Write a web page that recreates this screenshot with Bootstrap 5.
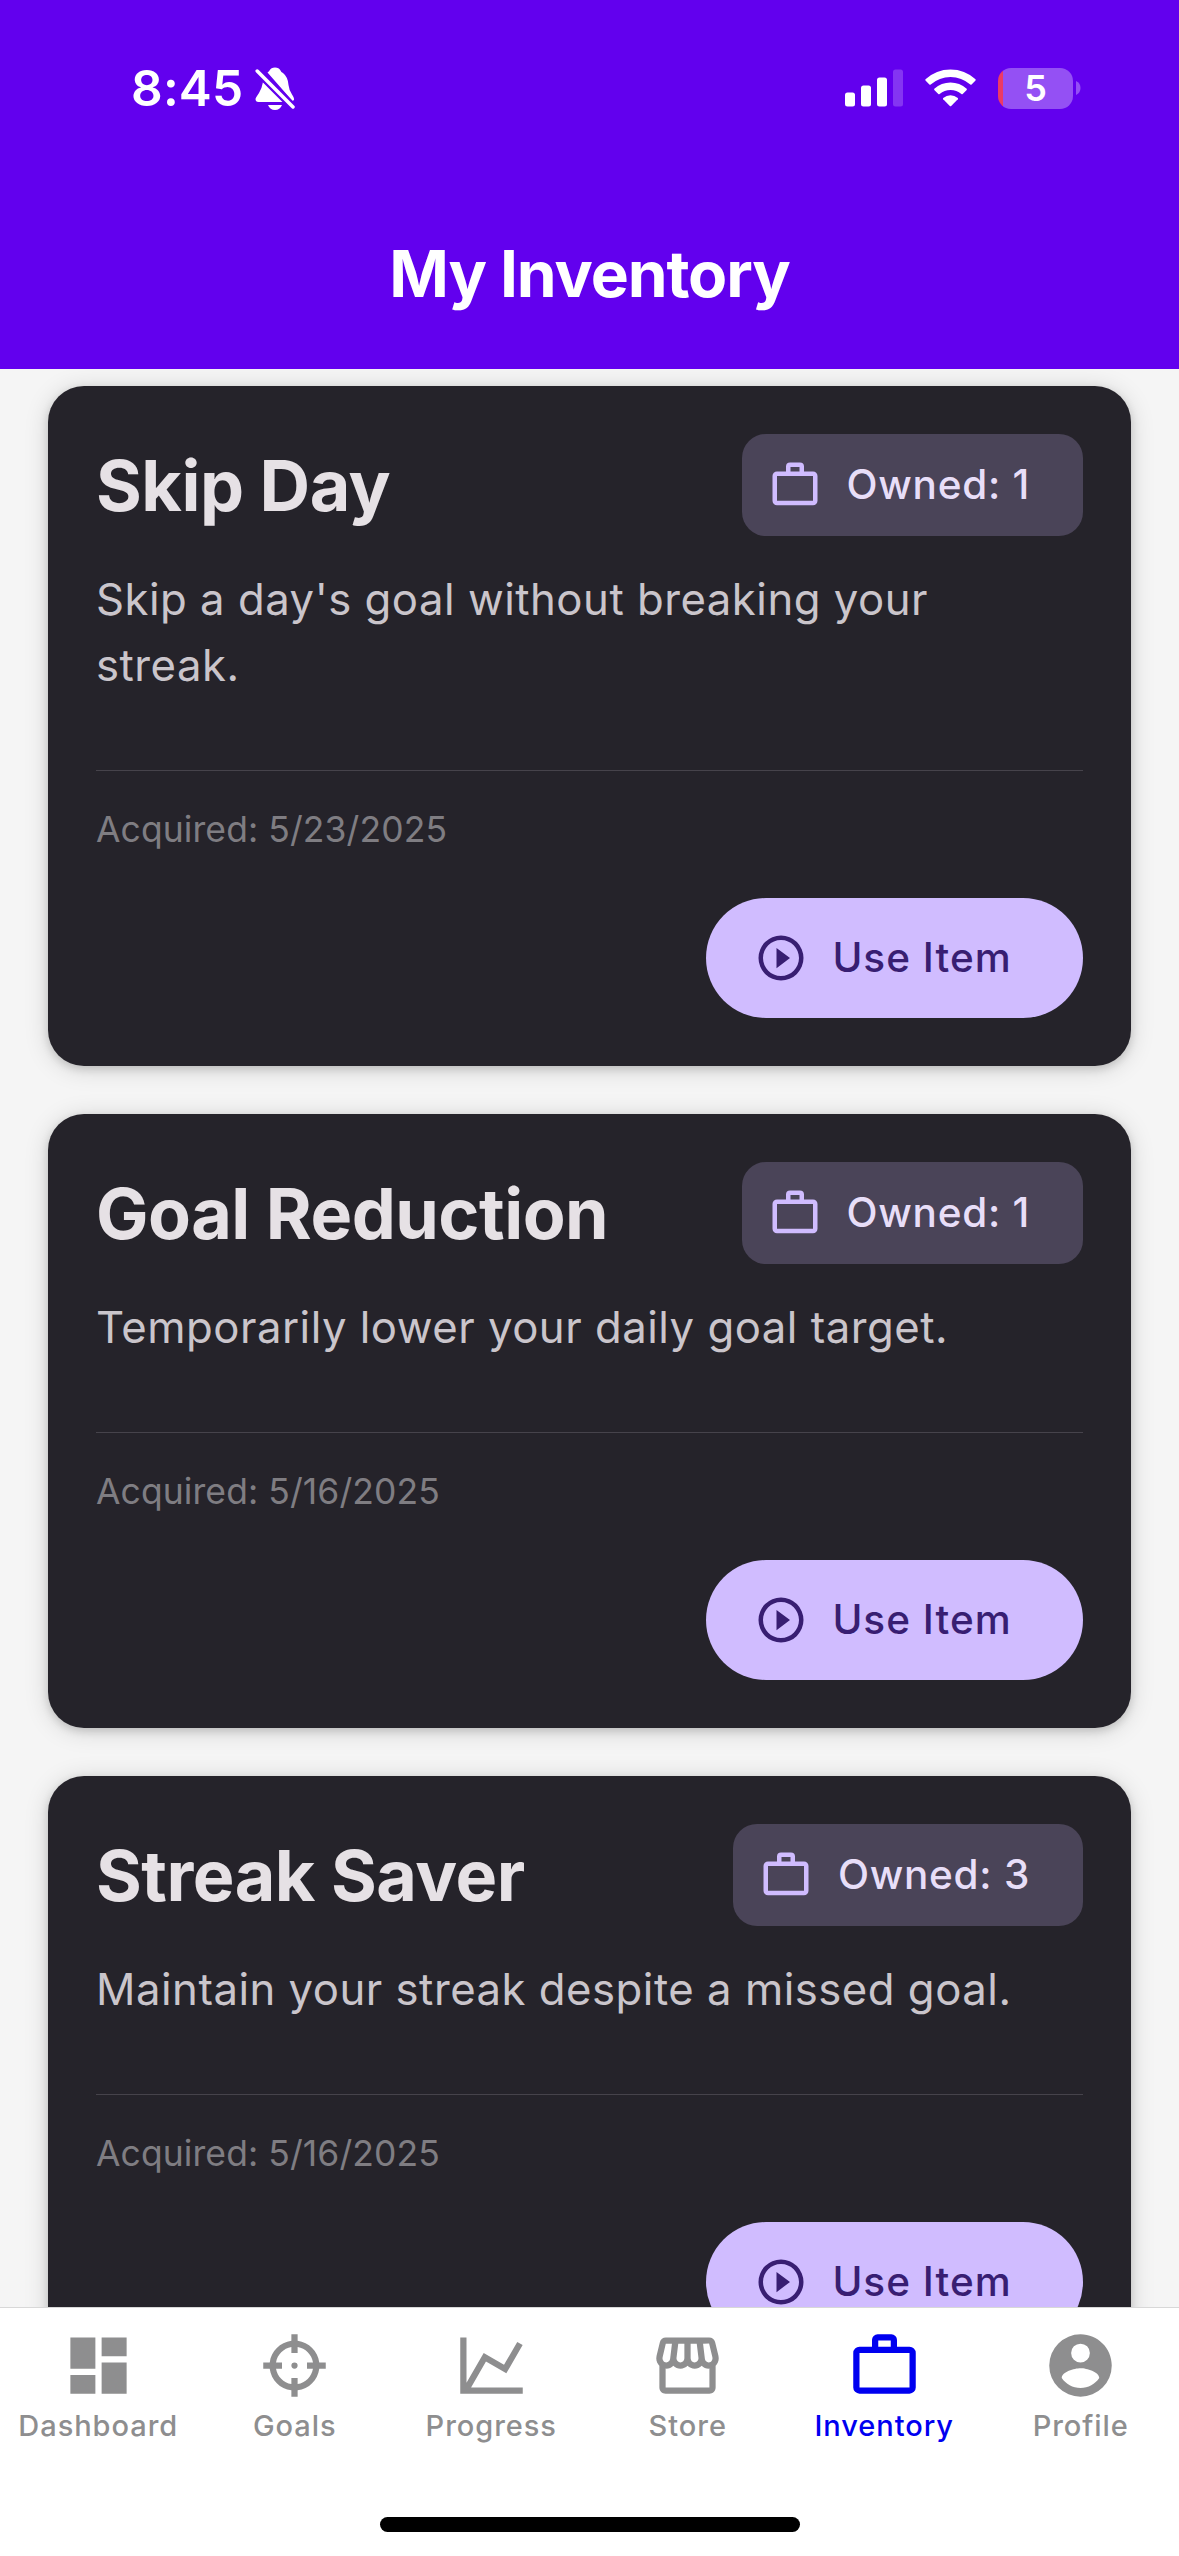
<!DOCTYPE html>
<html lang="en">
<head>
<meta charset="utf-8">
<meta name="viewport" content="width=device-width, initial-scale=1">
<title>My Inventory</title>
<link href="https://cdn.jsdelivr.net/npm/bootstrap@5.3.0/dist/css/bootstrap.min.css" rel="stylesheet">
<style>
  body { font-family: Inter, "Liberation Sans", sans-serif; background: #f5f5f5; }
  .app { height: 2556px; width: 1179px; }
  .app svg { display: block; flex: none; }
  .topbar { background: #6200ee; height: 369px; color: #fff; }
  .statusbar { height: 176px; padding: 0 98px 0 131px; }
  .clock { font-size: 49.5px; font-weight: 600; letter-spacing: .2px; line-height: 60px; }
  .bell { margin-left: 12px; }
  .wifi { margin-left: 22px; }
  .battery { width: 75px; height: 41px; border-radius: 13px; margin-left: 22px;
    background: linear-gradient(90deg, #ec3a66 5px, #9450f4 5px); font-size: 36px; font-weight: 600; line-height: 41px; }
  .nub { margin-left: 3px; }
  .screen-title { font-size: 64px; font-weight: 700; letter-spacing: -1.1px; line-height: 80px; padding-top: 58px; }
  .items { padding: 17px 48px 0; gap: 48px; min-height: 0; }
  .item-card { --bs-card-bg: #25232a; --bs-card-border-width: 0; border-radius: 36px; flex: none;
    box-shadow: 0 3px 9px rgba(0,0,0,.15), 0 3px 24px rgba(0,0,0,.15); }
  .item-card .card-body { padding: 48px; }
  .item-name { font-size: 70px; font-weight: 700; letter-spacing: -.5px; line-height: 90px; color: #e6e1e5; padding-top: 2px; }
  .owned { height: 102px; border-radius: 24px; background: #4a4458; color: #e8def8; padding: 0 53px 0 26.5px;
    gap: 24.5px; font-size: 40.5px; font-weight: 500; letter-spacing: .72px; }
  .owned svg { fill: #d0bcff; }
  .owned span, .use-btn span { padding-top: 1.5px; }
  .item-text { font-size: 43.7px; line-height: 66px; letter-spacing: .5px; color: #cac5cb; margin: 31px 0 71px; }
  .rule { height: 1px; background: #46434b; }
  .acquired { font-size: 35.5px; line-height: 60px; letter-spacing: .08px; color: #7f7d82; margin: 29px 0 38px; }
  .use-btn { --bs-btn-bg: #d0bcff; --bs-btn-color: #381e72; --bs-btn-border-width: 0; height: 120px;
    padding: 0 71.3px 0 48px; gap: 24.3px; font-size: 40.5px; font-weight: 500; letter-spacing: 1.02px; }
  .use-btn svg { fill: #381e72; }
  .tabbar { height: 249px; background: #fff; border-top: 1px solid #d8d8d8; padding-top: 19.5px; z-index: 2; }
  .tab { color: #8e8e8f; width: 196.5px; font-size: 29px; font-weight: 500; line-height: 40px; letter-spacing: .95px; }
  .tab svg { fill: currentColor; margin-bottom: 3px; }
  .tab.active { color: #0000f0; }
  .home-bar { width: 420px; height: 15px; background: #000; margin-bottom: 24px; }
</style>
</head>
<body>
<svg class="d-none">
  <symbol id="case" viewBox="0 0 24 24"><path fill-rule="evenodd" d="M20.500 6H16V3.800A1.800 1.800 0 0 0 14.200 2H9.800A1.800 1.800 0 0 0 8 3.800V6H4A2 2 0 0 0 2 8V19A2 2 0 0 0 4 21H20A2 2 0 0 0 22 19V8A2 2 0 0 0 20 6M10 4H14V6H10V4M20 19H4V8H20V19Z"/></symbol>
  <symbol id="play" viewBox="0 0 24 24"><path d="M12,20C7.590,20 4,16.410 4,12C4,7.590 7.590,4 12,4C16.410,4 20,7.590 20,12C20,16.410 16.410,20 12,20M12,2A10,10 0 0,0 2,12A10,10 0 0,0 12,22A10,10 0 0,0 22,12A10,10 0 0,0 12,2M10,16.500L16,12L10,7.500V16.500Z"/></symbol>
</svg>
<div class="app d-flex flex-column overflow-hidden">
  <header class="topbar flex-shrink-0">
    <div class="statusbar d-flex align-items-center">
      <span class="clock">8:45</span>
      <svg class="bell" width="40" height="43" viewBox="0 0 40 43">
        <g fill="#fff">
          <path d="M8 15Q7 21 4 26Q0.500 31 0.500 32Q0.500 35 3.500 35H28.500Z"/>
          <path d="M12.500 5.500Q14 4.500 14.500 3.500Q16 .5 20 .5Q24 .5 25.500 3.500Q26 5 28 6Q33 10 33.500 18Q34 23 37 27.500Q39.500 31 39 33L37.500 34Z"/>
          <path d="M13 38H27Q25 43 20 43Q15 43 13 38Z"/>
        </g>
        <path d="M2.200 4L38 40" stroke="#6200ee" stroke-width="8"/>
        <path d="M2.200 4L38 40" stroke="#fff" stroke-width="3.500" stroke-linecap="round"/>
      </svg>
      <svg class="ms-auto" width="58" height="38" viewBox="0 0 58 38" fill="#fff">
        <rect x="0" y="23.500" width="10" height="14" rx="2.500"/><rect x="16" y="16.500" width="10" height="21" rx="2.500"/><rect x="32" y="8.500" width="10" height="29" rx="2.500"/><rect x="48" y=".5" width="10" height="37" rx="2.500" fill="#8435f2"/>
      </svg>
      <svg class="wifi" width="51" height="38" viewBox="0 0 51 38" fill="#fff">
        <path d="M25.500 .5Q39.800 .5 50.500 10.300Q51 11 50.500 11.600L46.600 15.600Q46 16 45.300 15.600Q36.600 8 25.500 8Q14.400 8 5.700 15.600Q5 16 4.400 15.600L.5 11.600Q0 11 .5 10.300Q11.200 .5 25.500 .5Z"/>
        <path d="M25.500 13.500Q34.600 13.500 41.700 19.800Q42.100 20.400 41.700 21L37.700 25Q37 25.500 36.400 25Q31.600 21 25.500 21Q19.400 21 14.600 25Q14 25.500 13.300 25L9.300 21Q8.900 20.400 9.300 19.800Q16.400 13.500 25.500 13.500Z"/>
        <path d="M25.500 26.300Q29.500 26.300 32.800 29Q33.300 29.600 32.800 30.200L26.200 37Q25.500 37.600 24.800 37L18.200 30.200Q17.700 29.600 18.200 29Q21.500 26.300 25.500 26.300Z"/>
      </svg>
      <div class="battery text-center">5</div>
      <svg class="nub" width="5" height="14" viewBox="0 0 5 14"><path d="M0 0Q4.500 2 4.500 7Q4.500 12 0 14Z" fill="#9450f4"/></svg>
    </div>
    <h1 class="screen-title text-center mb-0">My Inventory</h1>
  </header>

  <main class="items d-flex flex-column flex-fill overflow-hidden">
    <article class="card item-card"><div class="card-body">
      <div class="d-flex justify-content-between align-items-center">
        <h2 class="item-name mb-0">Skip Day</h2>
        <div class="owned d-flex align-items-center"><svg width="54" height="54"><use href="#case"/></svg><span>Owned: 1</span></div>
      </div>
      <p class="item-text">Skip a day's goal without breaking your<br>streak.</p>
      <div class="rule"></div>
      <p class="acquired">Acquired: 5/23/2025</p>
      <div class="d-flex justify-content-end"><button class="btn use-btn rounded-pill d-flex align-items-center"><svg width="54" height="54"><use href="#play"/></svg><span>Use Item</span></button></div>
    </div></article>

    <article class="card item-card"><div class="card-body">
      <div class="d-flex justify-content-between align-items-center">
        <h2 class="item-name mb-0">Goal Reduction</h2>
        <div class="owned d-flex align-items-center"><svg width="54" height="54"><use href="#case"/></svg><span>Owned: 1</span></div>
      </div>
      <p class="item-text">Temporarily lower your daily goal target.</p>
      <div class="rule"></div>
      <p class="acquired">Acquired: 5/16/2025</p>
      <div class="d-flex justify-content-end"><button class="btn use-btn rounded-pill d-flex align-items-center"><svg width="54" height="54"><use href="#play"/></svg><span>Use Item</span></button></div>
    </div></article>

    <article class="card item-card"><div class="card-body">
      <div class="d-flex justify-content-between align-items-center">
        <h2 class="item-name mb-0">Streak Saver</h2>
        <div class="owned d-flex align-items-center"><svg width="54" height="54"><use href="#case"/></svg><span>Owned: 3</span></div>
      </div>
      <p class="item-text">Maintain your streak despite a missed goal.</p>
      <div class="rule"></div>
      <p class="acquired">Acquired: 5/16/2025</p>
      <div class="d-flex justify-content-end"><button class="btn use-btn rounded-pill d-flex align-items-center"><svg width="54" height="54"><use href="#play"/></svg><span>Use Item</span></button></div>
    </div></article>
  </main>

  <footer class="tabbar d-flex flex-column flex-shrink-0 justify-content-between align-items-center">
    <nav class="d-flex">
      <div class="tab d-flex flex-column align-items-center"><svg width="75" height="75" viewBox="0 0 24 24"><path d="M13,3V9H21V3M13,21H21V11H13M3,21H11V15H3M3,13H11V3H3V13Z"/></svg>Dashboard</div>
      <div class="tab d-flex flex-column align-items-center"><svg width="75" height="75" viewBox="0 0 24 24"><path d="M11,2V4.070C7.380,4.530 4.530,7.380 4.070,11H2V13H4.070C4.530,16.620 7.380,19.470 11,19.930V22H13V19.930C16.620,19.470 19.470,16.620 19.930,13H22V11H19.930C19.470,7.380 16.620,4.530 13,4.070V2M11,6.080V8H13V6.090C15.500,6.500 17.500,8.500 17.920,11H16V13H17.910C17.500,15.500 15.500,17.500 13,17.920V16H11V17.910C8.500,17.500 6.500,15.500 6.080,13H8V11H6.090C6.500,8.500 8.500,6.500 11,6.080M12,11A1,1 0 0,0 11,12A1,1 0 0,0 12,13A1,1 0 0,0 13,12A1,1 0 0,0 12,11Z"/></svg>Goals</div>
      <div class="tab d-flex flex-column align-items-center"><svg width="75" height="75" viewBox="0 0 24 24"><path d="M16,11.780L20.240,4.450L21.970,5.450L16.740,14.500L10.230,10.750L5.460,19H22V21H2V3H4V17.540L9.500,8L16,11.780Z"/></svg>Progress</div>
      <div class="tab d-flex flex-column align-items-center"><svg width="75" height="75" viewBox="0 0 24 24"><path d="M21.9 8.890l-1.050-4.370c-.22-.9-1-1.520-1.910-1.520H5.050c-.9 0-1.690.63-1.900 1.520L2.100 8.890c-.24 1.020-.02 2.060.62 2.880.08.11.19.19.28.29V19c0 1.100.9 2 2 2h14c1.100 0 2-.9 2-2v-6.940c.09-.09.2-.18.28-.28.64-.82.87-1.870.62-2.890zm-2.990-3.900l1.050 4.370c.1.42.01.84-.25 1.170-.14.18-.44.47-.94.47-.61 0-1.140-.49-1.210-1.140L16.980 5l1.930-.01zM13 5h1.960l.54 4.520c.05.39-.07.78-.33 1.070-.22.26-.54.41-.95.41-.67 0-1.220-.59-1.220-1.310V5zM8.490 9.520L9.040 5H11v4.690c0 .72-.55 1.310-1.290 1.310-.34 0-.65-.15-.89-.41-.25-.29-.37-.68-.33-1.070zm-4.450-.16L5.050 5h1.970l-.58 4.860c-.08.65-.6 1.140-1.210 1.140-.49 0-.8-.29-.93-.47-.27-.32-.36-.75-.26-1.170zM5 19v-6.030c.08.01.15.03.23.03.87 0 1.660-.36 2.240-.95.6.6 1.400.95 2.310.95.87 0 1.650-.36 2.230-.93.59.57 1.390.93 2.290.93.84 0 1.640-.35 2.240-.95.58.59 1.370.95 2.240.95.08 0 .15-.02.23-.03V19H5z"/></svg>Store</div>
      <div class="tab active d-flex flex-column align-items-center"><svg width="75" height="75"><use href="#case"/></svg>Inventory</div>
      <div class="tab d-flex flex-column align-items-center"><svg width="75" height="75" viewBox="0 0 24 24"><path d="M12,19.200C9.500,19.200 7.290,17.920 6,16C6.030,14 10,12.900 12,12.900C14,12.900 17.970,14 18,16C16.710,17.920 14.500,19.200 12,19.200M12,5A3,3 0 0,1 15,8A3,3 0 0,1 12,11A3,3 0 0,1 9,8A3,3 0 0,1 12,5M12,2A10,10 0 0,0 2,12A10,10 0 0,0 12,22A10,10 0 0,0 22,12C22,6.470 17.500,2 12,2Z"/></svg>Profile</div>
    </nav>
    <div class="home-bar rounded-pill"></div>
  </footer>
</div>
<script src="https://cdn.jsdelivr.net/npm/bootstrap@5.3.0/dist/js/bootstrap.bundle.min.js"></script>
</body>
</html>
